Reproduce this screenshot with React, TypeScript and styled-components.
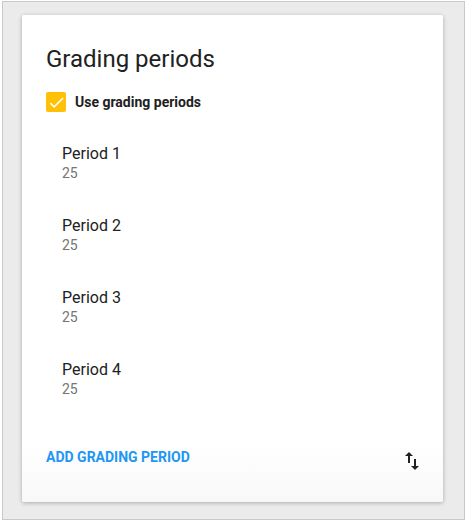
import React, { useState } from 'react';
import styled, { createGlobalStyle } from 'styled-components';

const GlobalStyle = createGlobalStyle`
  html, body {
    margin: 0;
    padding: 0;
    background: #fff;
  }
  body {
    font-family: Roboto, "Liberation Sans", Arial, sans-serif;
    color: #212121;
  }
`;

const periods = [
  { name: 'Period 1', weight: 25 },
  { name: 'Period 2', weight: 25 },
  { name: 'Period 3', weight: 25 },
  { name: 'Period 4', weight: 25 },
];

const App = () => {
  const [enabled, setEnabled] = useState(true);

  return (
    <>
      <GlobalStyle />
      <Frame>
        <Card>
          <Title>Grading periods</Title>
          <CheckRow onClick={() => setEnabled(!enabled)}>
            <Box checked={enabled}>
              {enabled && (
                <svg width="19" height="19" viewBox="0 0 24 24">
                  <path d="M9 16.17L4.83 12l-1.42 1.41L9 19 21 7l-1.41-1.41z" fill="#fff" />
                </svg>
              )}
            </Box>
            <CheckLabel>Use grading periods</CheckLabel>
          </CheckRow>
          <PeriodList>
            {periods.map((p) => (
              <PeriodItem key={p.name}>
                <PeriodName>{p.name}</PeriodName>
                <PeriodWeight>{p.weight}</PeriodWeight>
              </PeriodItem>
            ))}
          </PeriodList>
          <Footer>
            <AddButton>Add grading period</AddButton>
            <SortIcon>
              <svg width="24" height="24" viewBox="0 0 24 24">
                <path d="M16 17.01V10h-2v7.01h-3L15 21l4-3.99h-3zM9 3L5 6.99h3V14h2V6.99h3L9 3z" fill="#212121" />
              </svg>
            </SortIcon>
          </Footer>
        </Card>
      </Frame>
    </>
  );
};

export default App;

const Frame = styled.div`
  box-sizing: border-box;
  margin: 1px 0 0 2px;
  width: 463px;
  height: 519px;
  border: 1px solid #c9c9c9;
  background: #ebebeb;
  padding: 13px 21px 0 19px;
`;

const Card = styled.div`
  box-sizing: border-box;
  height: 487px;
  background: linear-gradient(to bottom, #fff 0%, #fff 88%, #f8f8f8 100%);
  box-shadow: 0 1px 4px rgba(0, 0, 0, 0.28);
  border-radius: 2px;
  padding: 30px 19px 0 24px;
  display: flex;
  flex-direction: column;
`;

const Title = styled.h1`
  margin: 0;
  font-size: 24px;
  line-height: 28px;
  font-weight: 400;
  color: #212121;
`;

const CheckRow = styled.label`
  margin-top: 19px;
  display: flex;
  align-items: center;
  cursor: pointer;
`;

const Box = styled.span<{ checked: boolean }>`
  width: 20px;
  height: 20px;
  border-radius: 2px;
  background: ${(p) => (p.checked ? '#fec108' : 'transparent')};
  border: ${(p) => (p.checked ? 'none' : '2px solid #757575')};
  display: flex;
  align-items: center;
  justify-content: center;
`;

const CheckLabel = styled.span`
  margin-left: 9px;
  font-size: 14px;
  line-height: 20px;
  font-weight: 700;
  color: #212121;
`;

const PeriodList = styled.div`
  margin-top: 16px;
  display: flex;
  flex-direction: column;
`;

const PeriodItem = styled.div`
  padding: 17px 16px;
  display: flex;
  flex-direction: column;
`;

const PeriodName = styled.div`
  font-size: 16px;
  line-height: 18px;
  color: #212121;
`;

const PeriodWeight = styled.div`
  font-size: 14px;
  line-height: 20px;
  color: #757575;
`;

const Footer = styled.div`
  margin-top: 23px;
  display: flex;
  align-items: center;
  justify-content: space-between;
`;

const AddButton = styled.button`
  border: none;
  background: none;
  padding: 0;
  height: 36px;
  font-family: Roboto, "Liberation Sans", Arial, sans-serif;
  font-size: 14px;
  font-weight: 700;
  text-transform: uppercase;
  color: #2196f3;
  cursor: pointer;
`;

const SortIcon = styled.span`
  display: flex;
  margin-top: 8px;
`;
